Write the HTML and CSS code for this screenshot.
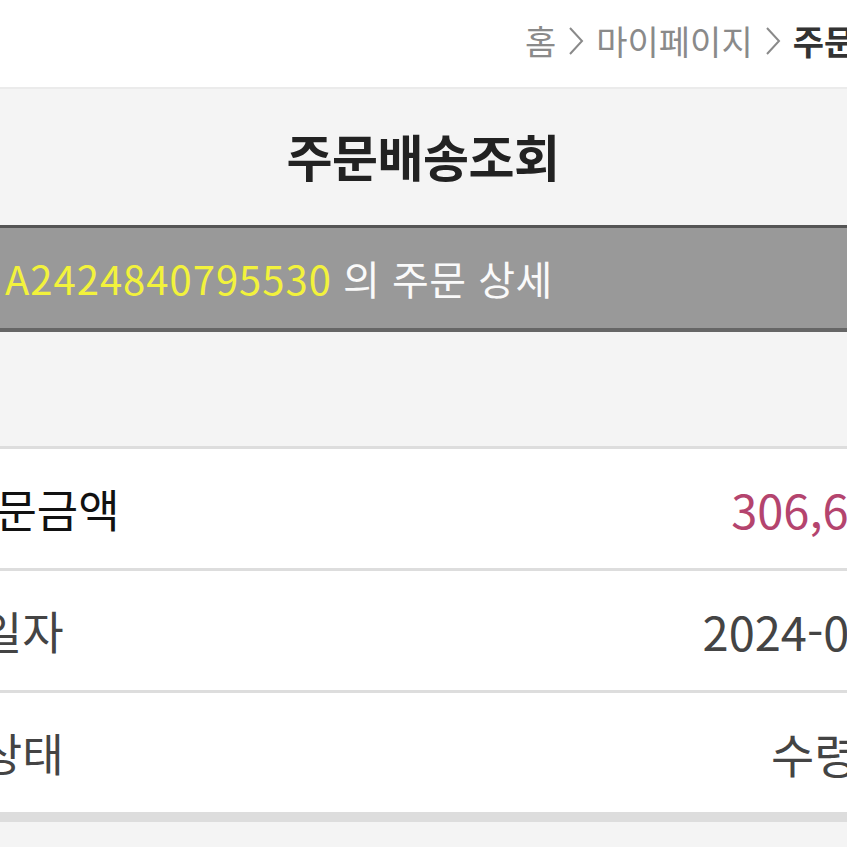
FILE: index.html
```html
<!DOCTYPE html>
<html lang="ko">
<head>
  <meta charset="UTF-8" />
  <meta name="viewport" content="width=device-width, initial-scale=1.0"/>
  <title>주문배송조회</title>
  <link rel="stylesheet" href="styles.css">
</head>
<body>
  <div class="page">
    <div class="top">
      <div class="breadcrumb">
        <span>홈</span>
        <svg class="sep" width="16" height="30" viewBox="0 0 16 30"><path d="M2 2 L14 15 L2 28" fill="none" stroke="#8a8a8a" stroke-width="2"/></svg>
        <span>마이페이지</span>
        <svg class="sep" width="16" height="30" viewBox="0 0 16 30"><path d="M2 2 L14 15 L2 28" fill="none" stroke="#8a8a8a" stroke-width="2"/></svg>
        <strong>주문배송조회</strong>
      </div>
    </div>

    <h1 class="title">주문배송조회</h1>

    <div class="order-bar">
      <span class="order-no">A2424840795530</span><span class="order-txt">의 주문 상세</span>
    </div>

    <div class="info">
      <div class="row">
        <span class="label strong">총 주문금액</span>
        <span class="value price">306,600원</span>
      </div>
      <div class="row">
        <span class="label">주문일자</span>
        <span class="value">2024-05-23</span>
      </div>
      <div class="row last">
        <span class="label">주문상태</span>
        <span class="value">수령완료</span>
      </div>
    </div>
  </div>
</body>
</html>
```

FILE: styles.css
```css
html, body {
  margin: 0;
  padding: 0;
  overflow: hidden;
  background: #f4f4f4;
}

body {
  font-family: "Noto Sans CJK KR", "Noto Sans", sans-serif;
  width: 847px;
  height: 847px;
}

.page {
  width: 1060px;
  margin-left: -107px;
}

.top {
  height: 87px;
  background: #fff;
  border-bottom: 2px solid #ebebeb;
  display: flex;
  align-items: center;
}

.breadcrumb {
  padding-left: 632px;
  font-size: 34px;
  color: #8a8a8a;
  white-space: nowrap;
  display: flex;
  align-items: center;
  gap: 12px;
  margin-top: -6px;
}

.breadcrumb strong {
  color: #333;
  font-weight: bold;
}

.title {
  margin: 0;
  height: 136px;
  line-height: 132px;
  text-align: center;
  font-size: 50px;
  font-weight: bold;
  color: #222;
  letter-spacing: -0.5px;
}

.order-bar {
  background: #999;
  border-top: 3px solid #555;
  border-bottom: 4px solid #666;
  height: 100px;
  line-height: 100px;
  padding-left: 112px;
  font-size: 40px;
  color: #fafafa;
  white-space: nowrap;
}

.order-no {
  color: #f2f23c;
  letter-spacing: 1px;
}

.order-txt {
  margin-left: 11px;
  letter-spacing: 0.5px;
}

.info {
  margin-top: 114px;
  background: #fff;
  border-top: 3px solid #ddd;
}

.row {
  height: 119px;
  border-bottom: 3px solid #ddd;
  display: flex;
  justify-content: space-between;
  align-items: center;
  padding: 0 9px 0 5px;
  color: #444;
  white-space: nowrap;
}

.row.last {
  border-bottom: 10px solid #ddd;
}

.label {
  font-size: 45px;
  word-spacing: 2px;
}

.label.strong {
  color: #111;
}

.value {
  font-size: 47px;
}

.value.price {
  color: #b4446e;
}
```
